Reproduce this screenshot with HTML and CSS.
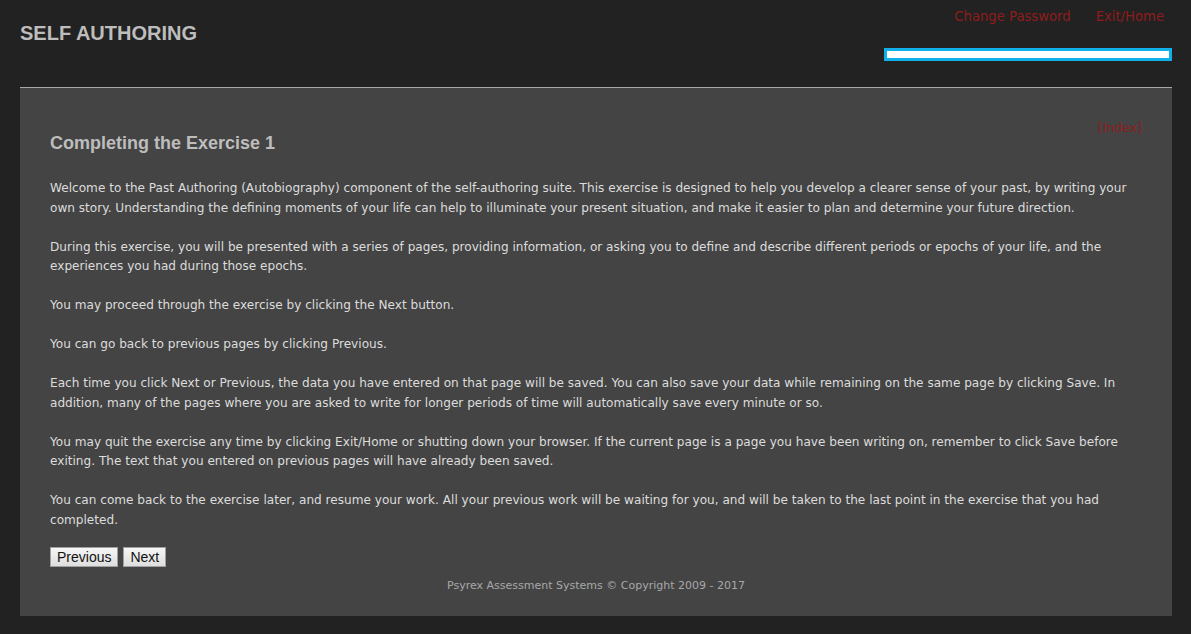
FILE: index.html
```html
<!DOCTYPE html>
<html>
<head>
<meta charset="utf-8">
<link rel="stylesheet" href="styles.css">
</head>
<body>
<div class="header">
  <div class="site-title">SELF AUTHORING</div>
  <div class="header-right">
    <div class="top-links">
      <a href="#">Change Password</a>
      <a href="#">Exit/Home</a>
    </div>
    <div class="progress"></div>
  </div>
</div>
<div class="panel">
  <div class="panel-head">
    <h1>Completing the Exercise 1</h1>
    <a class="index-link" href="#">[Index]</a>
  </div>
  <p>Welcome to the Past Authoring (Autobiography) component of the self-authoring suite. This exercise is designed to help you develop a clearer sense of your past, by writing your own story. Understanding the defining moments of your life can help to illuminate your present situation, and make it easier to plan and determine your future direction.</p>
  <p>During this exercise, you will be presented with a series of pages, providing information, or asking you to define and describe different periods or epochs of your life, and the experiences you had during those epochs.</p>
  <p>You may proceed through the exercise by clicking the Next button.</p>
  <p>You can go back to previous pages by clicking Previous.</p>
  <p>Each time you click Next or Previous, the data you have entered on that page will be saved. You can also save your data while remaining on the same page by clicking Save. In addition, many of the pages where you are asked to write for longer periods of time will automatically save every minute or so.</p>
  <p>You may quit the exercise any time by clicking Exit/Home or shutting down your browser. If the current page is a page you have been writing on, remember to click Save before exiting. The text that you entered on previous pages will have already been saved.</p>
  <p>You can come back to the exercise later, and resume your work. All your previous work will be waiting for you, and will be taken to the last point in the exercise that you had completed.</p>
  <div class="buttons">
    <button class="btn">Previous</button>
    <button class="btn">Next</button>
  </div>
  <div class="footer">Psyrex Assessment Systems © Copyright 2009 - 2017</div>
</div>
</body>
</html>
```
FILE: styles.css
```css
html, body {
  margin: 0;
  padding: 0;
  background: #222222;
}
body {
  padding: 0 19px 18px 20px;
  font-family: "DejaVu Sans", Verdana, sans-serif;
}
.header {
  display: flex;
  justify-content: space-between;
  height: 87px;
  box-sizing: border-box;
}
.site-title {
  font-family: "Liberation Sans", Arial, sans-serif;
  font-weight: bold;
  font-size: 20px;
  color: #bdbdbd;
  padding-top: 22px;
}
.header-right {
  display: flex;
  flex-direction: column;
  align-items: flex-end;
}
.top-links {
  display: flex;
  gap: 25px;
  padding-top: 9px;
  padding-right: 8px;
  font-size: 13.2px;
  line-height: 15px;
}
.top-links a {
  color: #8e1c1c;
  text-decoration: none;
}
.progress {
  margin-top: 24px;
  width: 282px;
  height: 7px;
  background: #ffffff;
  border: 3px solid #12b0ea;
}
.panel {
  background: #444444;
  border-top: 1px solid #a8a8a8;
  padding: 28px 30px 21px 30px;
  color: #dcdcdc;
  font-size: 12.1px;
  line-height: 19.5px;
}
.panel-head {
  display: flex;
  justify-content: space-between;
  align-items: flex-start;
}
.panel-head h1 {
  margin: 16px 0 25px 0;
  font-family: "Liberation Sans", Arial, sans-serif;
  font-size: 18px;
  font-weight: bold;
  color: #bdbdbd;
  line-height: 22px;
}
.index-link {
  color: #8e1c1c;
  text-decoration: none;
  margin-top: 2px;
  font-size: 12.5px;
}
.panel p {
  margin: 0 0 19.5px 0;
}
.buttons {
  display: flex;
  gap: 5px;
  margin-top: -3px;
}
.btn {
  font-family: "Liberation Sans", Arial, sans-serif;
  font-size: 14px;
  color: #111;
  background: linear-gradient(#f6f6f6, #dedede);
  border: 1px solid #a0a0a0;
  padding: 1px 6px;
  height: 20px;
  line-height: 16px;
}
.footer {
  text-align: center;
  font-size: 11px;
  color: #a8a8a8;
  margin-top: 9px;
}
```
